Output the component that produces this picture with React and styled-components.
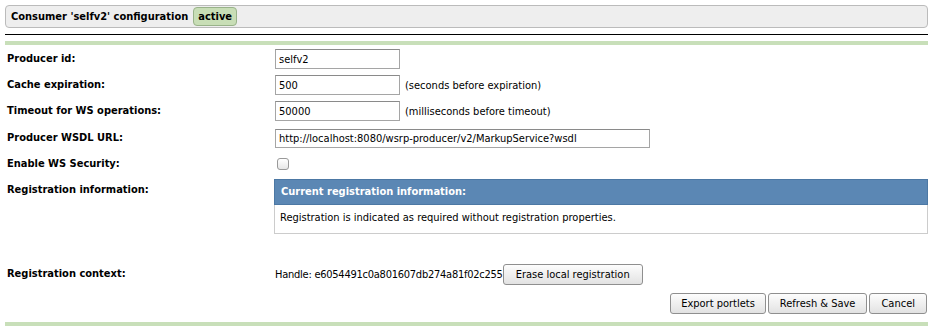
import React from 'react'
import styled, { createGlobalStyle } from 'styled-components'

const GlobalStyle = createGlobalStyle`
  body {
    margin: 0;
    background: #fff;
    font-family: "DejaVu Sans Condensed", "DejaVu Sans", sans-serif;
    font-size: 11px;
    color: #000;
  }
`

const Page = styled.div`
  padding: 5px 6px 0 5px;
  width: 923px;
`

const Header = styled.div`
  height: 21px;
  border: 1px solid #bbb;
  border-radius: 4px;
  background: #eee;
  display: flex;
  align-items: center;
  gap: 5px;
  padding-left: 5px;
  font-weight: bold;
`

const Badge = styled.span`
  background: #c8deb6;
  border: 1px solid #99b38a;
  border-radius: 4px;
  padding: 1px 4px;
  line-height: 15px;
`

const Rule = styled.div`
  margin-top: 6px;
  height: 1px;
  background: #000;
`

const GreenBar = styled.div`
  margin-top: ${(p) => p.$top}px;
  height: 4px;
  background: #c8dfb9;
`

const Form = styled.div`
  display: grid;
  grid-template-columns: 268px 1fr;
  row-gap: 6px;
  margin-top: 4px;
  padding-left: 2px;
`

const Label = styled.div`
  font-weight: bold;
  height: ${(p) => p.$h || 20}px;
  line-height: 20px;
  margin-top: ${(p) => p.$top || 0}px;
`

const Value = styled.div`
  display: flex;
  align-items: ${(p) => (p.$top ? 'flex-start' : 'center')};
  gap: 5px;
  min-height: 20px;
  margin-top: ${(p) => p.$mt || 0}px;
`

const Input = styled.input`
  box-sizing: border-box;
  width: ${(p) => p.$w}px;
  height: ${(p) => p.$h || 20}px;
  border: 1px solid #a5a5a5;
  border-top-color: #8a8a8a;
  padding: 0 3px;
  margin: 0;
  font-family: inherit;
  font-size: 11px;
  color: #000;
  outline: none;
`

const Check = styled.span`
  display: inline-block;
  width: 10px;
  height: 10px;
  margin-left: 2px;
  border: 1px solid #999;
  border-radius: 3px;
  background: linear-gradient(#fff, #e6e6e6);
`

const RegBox = styled.div`
  margin-top: -1px;
  margin-left: -1px;
  width: 654px;
  box-sizing: border-box;
  border: 1px solid #ccc;
  border-top: none;
`

const RegHead = styled.div`
  background: #5b87b4;
  border: 1px solid #4c78a4;
  margin: 0 -1px;
  height: 24px;
  line-height: 24px;
  padding-left: 6px;
  color: #fff;
  font-weight: bold;
`

const RegBody = styled.div`
  height: 28px;
  line-height: 26px;
  padding-left: 5px;
`

const Handle = styled.div`
  display: flex;
  align-items: center;
`

const HandleText = styled.span`
  letter-spacing: -0.25px;
`

const Button = styled.button`
  height: 21px;
  padding: 0 ${(p) => p.$pad || 11}px;
  border: 1px solid #8f8f8f;
  border-radius: 3px;
  background: linear-gradient(#fdfdfd, #e2e2e2);
  font-family: inherit;
  font-size: 11px;
  color: #000;
  margin: 0;
`

const Actions = styled.div`
  display: flex;
  justify-content: flex-end;
  gap: 2px;
  margin-top: 8px;
  padding-right: 1px;
`

const App = () => {
  return (
    <Page>
      <GlobalStyle />
      <Header>
        Consumer 'selfv2' configuration <Badge>active</Badge>
      </Header>
      <Rule />
      <GreenBar $top={6} />

      <Form>
        <Label>Producer id:</Label>
        <Value>
          <Input $w={125} defaultValue="selfv2" />
        </Value>

        <Label>Cache expiration:</Label>
        <Value>
          <Input $w={125} defaultValue="500" />
          <span>(seconds before expiration)</span>
        </Value>

        <Label>Timeout for WS operations:</Label>
        <Value>
          <Input $w={125} defaultValue="50000" />
          <span>(milliseconds before timeout)</span>
        </Value>

        <Label $top={1}>Producer WSDL URL:</Label>
        <Value $mt={1}>
          <Input $w={375} $h={19} defaultValue="http://localhost:8080/wsrp-producer/v2/MarkupService?wsdl" />
        </Value>

        <Label>Enable WS Security:</Label>
        <Value>
          <Check />
        </Value>

        <Label $h={78}>Registration information:</Label>
        <Value $top>
          <RegBox>
            <RegHead>Current registration information:</RegHead>
            <RegBody>Registration is indicated as required without registration properties.</RegBody>
          </RegBox>
        </Value>

        <Label>Registration context:</Label>
        <Value>
          <Handle>
            <HandleText>Handle: e6054491c0a801607db274a81f02c255</HandleText>
            <Button $pad={12}>Erase local registration</Button>
          </Handle>
        </Value>
      </Form>

      <Actions>
        <Button $pad={10}>Export portlets</Button>
        <Button $pad={11}>Refresh &amp; Save</Button>
        <Button $pad={11}>Cancel</Button>
      </Actions>
      <GreenBar $top={8} />
    </Page>
  )
}

export default App
